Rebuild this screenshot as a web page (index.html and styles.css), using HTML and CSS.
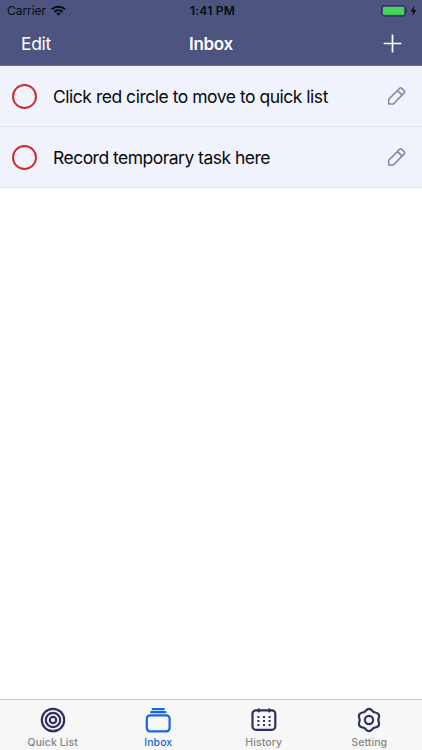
FILE: index.html
```html
<!DOCTYPE html>
<html lang="en">
<head>
<meta charset="utf-8">
<title>Inbox</title>
<link rel="stylesheet" href="styles.css">
</head>
<body>
<div class="app">
  <header class="header">
    <div class="status">
      <div class="carrier"><span>Carrier</span>
        <svg width="15" height="11" viewBox="0 0 15 11" fill="none" stroke="#080a14" stroke-width="2"><path d="M.9 4.3a9.6 9.6 0 0 1 13.2 0M3.3 6.9a6.2 6.2 0 0 1 8.4 0"/><path d="M7.5 10.6 5.2 8.5a3.4 3.4 0 0 1 4.6 0z" fill="#080a14" stroke="none"/></svg>
      </div>
      <span class="time">1:41 PM</span>
      <div class="power">
        <svg width="37" height="12" viewBox="0 0 37 12"><rect x=".6" y=".7" width="23.8" height="10.4" rx="2.4" fill="none" stroke="#2b3050"/><rect x="2" y="2" width="21" height="7.8" rx="1.2" fill="#46d657"/><path d="M25.8 4.2q1.6 1.7 0 3.4z" fill="#20243e"/><path d="M33.2.8 29.7 6.4h2.5l-1 4.5 4-5.9h-2.6z" fill="#080a14"/></svg>
      </div>
    </div>
    <nav class="nav">
      <span class="edit">Edit</span>
      <h1 class="title">Inbox</h1>
      <svg class="add" width="19" height="19" viewBox="0 0 19 19" stroke="#fff" stroke-width="1.7"><path d="M9.5.6v17.8M.6 9.5h17.8"/></svg>
    </nav>
  </header>
  <main class="list">
    <div class="row">
      <span class="circle"></span>
      <span class="task">Click red circle to move to quick list</span>
      <svg class="pencil" width="20" height="20" viewBox="0 0 20 20"><path d="M1.7 18v-4.700L12.900 2.100q.8-.7 1.600 0l2.900 2.900q.8.8 0 1.600L6.400 18zM10.600 4.600l4.500 4.500"/></svg>
    </div>
    <div class="row">
      <span class="circle"></span>
      <span class="task task-short">Record temporary task here</span>
      <svg class="pencil" width="20" height="20" viewBox="0 0 20 20"><path d="M1.7 18v-4.700L12.900 2.100q.8-.7 1.600 0l2.900 2.900q.8.8 0 1.600L6.400 18zM10.600 4.600l4.500 4.500"/></svg>
    </div>
  </main>
  <footer class="tabs">
    <div class="tab">
      <svg class="icon" viewBox="0 0 26 26"><circle cx="13" cy="13" r="11.2"/><circle cx="13" cy="13" r="7.2"/><circle cx="13" cy="13" r="3.2"/></svg>
      <span class="label">Quick List</span>
    </div>
    <div class="tab active">
      <svg class="icon" viewBox="0 0 26 26"><rect x="1.800" y="8.300" width="22.800" height="16" rx="3.200"/><path d="M7.700 2.100h11.200M6.200 5.200h14.200"/></svg>
      <span class="label">Inbox</span>
    </div>
    <div class="tab">
      <svg class="icon" viewBox="0 0 26 26"><rect x="1.500" y="3.400" width="22.800" height="19.400" rx="3.400"/><path d="M7.800 2.400v2M18.300 2.400v2"/><path class="dots" d="M7.400 9v10M13 9v10M18.600 9v10"/></svg>
      <span class="label">History</span>
    </div>
    <div class="tab">
      <svg class="icon" viewBox="0 0 26 26"><path d="M13 1.800C15.400 1.800 16.260 4.150 17.650 4.950S21.500 5.320 22.700 7.400 22.300 11.400 22.300 13 23.900 16.520 22.700 18.600 19.040 20.250 17.650 21.050 15.400 24.200 13 24.200 9.740 21.850 8.350 21.050 4.500 20.680 3.300 18.600 3.700 14.600 3.700 13 2.100 9.480 3.300 7.400 6.960 5.750 8.350 4.950 10.600 1.800 13 1.800z"/><circle cx="13" cy="13" r="4.100"/></svg>
      <span class="label">Setting</span>
    </div>
  </footer>
</div>
</body>
</html>
```
FILE: styles.css
```css
* { box-sizing: border-box; }
body { margin: 0; font-family: Inter, "Liberation Sans", sans-serif; color: #080a10; background: #fff; }
svg { display: block; flex: none; }
.app { height: 750px; display: flex; flex-direction: column; overflow: hidden; }
.header { height: 66px; flex: none; background: #4c547f; border-bottom: 1px solid #6b7193; }
.status { height: 22px; display: grid; grid-template-columns: 1fr auto 1fr; align-items: center; padding: 0 4px 0 7px; font-size: 12px; line-height: 22px; color: #080a14; }
.carrier { display: flex; align-items: center; gap: 5px; letter-spacing: -.05px; }
.carrier svg { margin-bottom: 1px; }
.time { font-weight: 600; letter-spacing: .25px; }
.power { display: flex; justify-content: flex-end; }
.nav { height: 43px; display: grid; grid-template-columns: 1fr auto 1fr; align-items: center; padding: 0 20px 0 21px; color: #fff; font-size: 17.5px; }
.edit { letter-spacing: -.35px; }
.title { margin: 0 1px 0 0; font-size: 17px; font-weight: 600; letter-spacing: -.3px; }
.add { justify-self: end; margin-top: -1px; }
.list { flex: 1; }
.row { height: 61px; display: flex; align-items: center; padding: 0 15px 0 12px; background: #f0f3fb; border-bottom: 1px solid #e0e3ea; }
.circle { width: 25px; height: 25px; border: 2px solid #d02b35; border-radius: 50%; }
.task { flex: 1; margin-left: 16px; font-size: 17.5px; letter-spacing: -.48px; white-space: nowrap; }
.task-short { letter-spacing: -.52px; }
.pencil { fill: none; stroke: #8285a5; stroke-width: 1.5; stroke-linejoin: round; }
.tabs { height: 51px; flex: none; display: grid; grid-template-columns: repeat(4, 1fr); background: #f7f7f7; border-top: 1px solid #c9c9c9; }
.tab { display: flex; flex-direction: column; align-items: center; padding-top: 7px; color: #858585; }
.icon { width: 26px; height: 26px; fill: none; stroke: #2d3163; stroke-width: 2.2; stroke-linecap: round; }
.active { color: #1964dc; }
.active .icon { stroke: #1766e8; }
.dots { stroke-width: 2; stroke-linecap: butt; stroke-dasharray: 2 2; }
.label { margin-top: 3px; font-size: 10.5px; font-weight: 500; line-height: 14px; letter-spacing: .08px; }
```
